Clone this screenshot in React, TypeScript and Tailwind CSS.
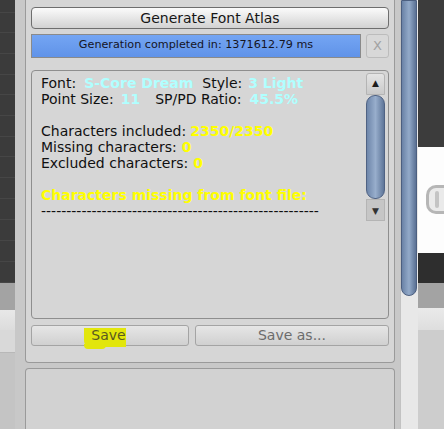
import React from 'react';

const leftRows = ['h-[13px]', 'h-[20px]', 'h-[21px]', 'h-[21px]', 'h-[20px]', 'h-[21px]', 'h-[21px]', 'h-[20px]', 'h-[21px]', 'h-[21px]', 'h-[21px]', 'h-[21px]', 'h-[21px]', 'h-[21px]'];

const dashes = '-'.repeat(55);

const App = () => {
    return (
        <div className="flex w-[444px] h-[429px] overflow-hidden bg-[#c8c8c8] font-['DejaVu_Sans',sans-serif]">
            {/* left strip: the window behind */}
            <div className="flex flex-col w-[15px] shrink-0">
                <div className="flex flex-col bg-[#3b3b3b]">
                    {leftRows.map((h, i) => (
                        <div key={i} className={`${h} border-b border-[#464646]`}></div>
                    ))}
                </div>
                <div className="h-[27px] bg-[#a3a3a3]"></div>
                <div className="h-[20px] bg-gradient-to-b from-[#e8e8e8] to-[#dcdcdc]"></div>
                <div className="h-[23px] bg-[#d9d9d9] border-b border-[#b8b8b8]"></div>
                <div className="flex-1 bg-[#c4c4c4]"></div>
            </div>

            {/* inspector column */}
            <div className="flex flex-col w-[385px] shrink-0 pl-[10px] pr-[5px] bg-[#c8c8c8]">
                <div className="flex flex-col h-[363px] shrink-0 border-x border-b border-[#9a9a9a] rounded-b-[4px] bg-[#d6d6d6] px-[5px] pt-[7px]">
                    {/* Generate button */}
                    <div className="flex items-center justify-center h-[22px] rounded-[4px] border border-[#6e6e6e] bg-gradient-to-b from-[#fbfbfb] to-[#d2d2d2] text-[14px] text-[#161616]">
                        Generate Font Atlas
                    </div>

                    {/* progress */}
                    <div className="flex mt-[5px] gap-[5px]">
                        <div className="flex items-center justify-center w-[330px] h-[24px] pb-[2px] border border-[#8a8a8a] bg-gradient-to-b from-[#74a5f3] to-[#6093e8] text-[11.2px] text-[#15151f]">
                            Generation completed in: 1371612.79 ms
                        </div>
                        <div className="flex items-center justify-center w-[23px] h-[24px] rounded-[3px] border border-[#bcbcbc] bg-[#d8d8d8] text-[13px] text-[#a2a2a2]">
                            X
                        </div>
                    </div>

                    {/* output box */}
                    <div className="flex h-[249px] mt-[12px] rounded-[4px] border border-[#8e8e8e] bg-[#d6d6d6]">
                        <div className="flex-1 pl-[9px] pt-[4px] text-[14px] leading-[16px] text-[#101010] whitespace-pre">
                            <div>
                                Font:<span className="ml-[8px] font-bold text-[#b0ffff]">S-Core Dream</span>
                                <span className="ml-[9px]">Style:</span>
                                <span className="ml-[6px] font-bold text-[#b0ffff]">3 Light</span>
                            </div>
                            <div>
                                Point Size:<span className="ml-[7px] font-bold text-[#b0ffff]">11</span>
                                <span className="ml-[15px]">SP/PD Ratio:</span>
                                <span className="ml-[8px] font-bold text-[#b0ffff]">45.5%</span>
                            </div>
                            <div className="h-[16px]"></div>
                            <div>Characters included:<span className="ml-[4px] font-bold text-[#ffff00]">2350/2350</span></div>
                            <div>Missing characters:<span className="ml-[5px] font-bold text-[#ffff00]">0</span></div>
                            <div>Excluded characters:<span className="ml-[5px] font-bold text-[#ffff00]">0</span></div>
                            <div className="h-[16px]"></div>
                            <div className="font-bold text-[#ffff00]">Characters missing from font file:</div>
                            <div>{dashes}</div>
                        </div>

                        {/* small scrollbar */}
                        <div className="flex flex-col w-[19px] h-[148px] mt-[2px] mr-[3px]">
                            <div className="flex items-center justify-center h-[22px] border border-[#b4b4b4] rounded-t-[3px] bg-gradient-to-b from-[#e4e4e4] to-[#cacaca] text-[9px] text-[#1c1c1c]">
                                ▲
                            </div>
                            <div className="h-[104px] rounded-[9px] border border-[#4f6283] bg-gradient-to-r from-[#6e86aa] via-[#98aecc] to-[#5f7699]"></div>
                            <div className="flex items-center justify-center h-[22px] border border-[#b4b4b4] bg-[#c6c6c6] pt-[3px] text-[9px] text-[#333]">
                                ▼
                            </div>
                        </div>
                    </div>

                    {/* save buttons */}
                    <div className="flex mt-[6px] gap-[6px]">
                        <div className="relative flex items-center justify-center w-[158px] h-[21px] rounded-[3px] border border-[#a4a4a4] bg-gradient-to-b from-[#e6e6e6] to-[#d0d0d0] text-[14px]">
                            <div className="absolute left-[52px] top-[2px] w-[42px] h-[19px] rounded-bl-[6px] bg-[#e2e60c]"></div>
                            <div className="absolute left-[52px] top-[18px] w-[22px] h-[5px] rounded-b-[4px] bg-[#e2e60c]"></div>
                            <span className="relative mr-[3px] text-[#5a5a20]">Save</span>
                        </div>
                        <div className="flex items-center justify-center w-[194px] h-[21px] rounded-[3px] border border-[#a4a4a4] bg-gradient-to-b from-[#e6e6e6] to-[#d0d0d0] text-[14px] text-[#6c6c6c]">
                            Save as...
                        </div>
                    </div>
                </div>

                {/* lower panel */}
                <div className="flex-1 mt-[5px] rounded-t-[4px] border-x border-t border-[#9a9a9a] bg-[#d2d2d2]"></div>
            </div>

            {/* main scrollbar */}
            <div className="flex flex-col w-[18px] shrink-0 bg-[#e8e8e8] border-l border-[#c2c2c2]">
                <div className="h-[296px] w-[16px] rounded-b-[8px] border border-[#4c5f80] bg-gradient-to-r from-[#6a82a6] via-[#93aac9] to-[#5b7194]"></div>
            </div>

            {/* right strip: the window behind */}
            <div className="flex flex-col w-[26px] shrink-0">
                <div className="h-[147px] bg-[#3c3c3c]"></div>
                <div className="flex items-center h-[106px] bg-[#fdfdfd] pb-[2px]">
                    <div className="flex items-center ml-[8px] w-[18px] h-[29px] rounded-l-[10px] border-[3px] border-r-0 border-[#b6b6b6] bg-[#eaeaea] pl-[6px]">
                        <div className="w-[4px] h-[17px] rounded-[2px] bg-[#c4c4c4]"></div>
                    </div>
                </div>
                <div className="h-[30px] bg-[#2e2e2e]"></div>
                <div className="h-[25px] bg-[#a3a3a3]"></div>
                <div className="h-[22px] bg-gradient-to-b from-[#eaeaea] to-[#dedede]"></div>
                <div className="flex-1 bg-[#cdcdcd]"></div>
            </div>
        </div>
    );
};

export default App;
